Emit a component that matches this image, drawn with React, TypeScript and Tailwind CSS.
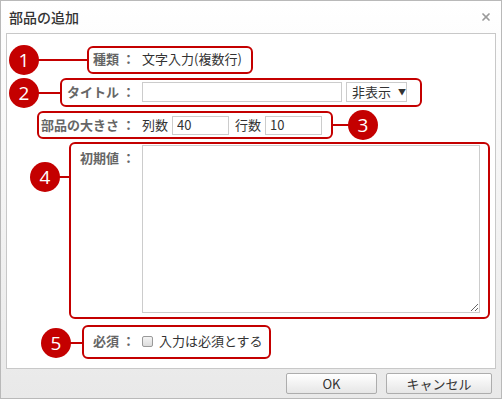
import { X } from 'lucide-react';

const font = { fontFamily: '"Noto Sans CJK JP", "Noto Sans", sans-serif' };

function Marker({ n, className }: { n: number; className: string }) {
  return (
    <div
      className={`absolute flex h-[30px] w-[30px] items-center justify-center rounded-full bg-[#c40000] text-[19px] leading-none text-white ${className}`}
      style={{ fontFamily: '"Open Sans", sans-serif' }}
    >
      {n}
    </div>
  );
}

function Label({ text, className = '' }: { text: string; className?: string }) {
  return (
    <span className={`whitespace-nowrap text-right font-bold text-[#666] ${className}`}>
      {text}
      <span className="ml-[3px]">：</span>
    </span>
  );
}

export default function App() {
  return (
    <div className="relative h-[399px] w-[502px] bg-white text-[13px] text-[#333]" style={font}>
      <div className="flex h-full flex-col border border-[#b9b9b9] bg-gradient-to-b from-white to-[#e9e9e9]">
        {/* title bar */}
        <div className="flex h-[32px] items-center justify-between pl-[8px] pr-[9px]">
          <span className="text-[14px] font-medium text-[#333]">部品の追加</span>
          <X className="h-[12px] w-[12px] text-[#9a9a9a]" strokeWidth={3.5} />
        </div>

        {/* content */}
        <div className="mx-[5px] flex h-[336px] flex-col border border-[#c8c8c8] bg-white">
          <div className="mt-[13px] grid h-[24px] grid-cols-[128px_1fr] items-center gap-x-[7px]">
            <Label text="種類" />
            <span>文字入力(複数行)</span>
          </div>

          <div className="mt-[11px] grid h-[20px] grid-cols-[128px_1fr] items-center gap-x-[7px]">
            <Label text="タイトル" />
            <div className="flex items-center gap-[4px]">
              <input className="h-[20px] w-[200px] border border-[#ccc] outline-none" />
              <div className="flex h-[20px] w-[61px] items-center gap-[7px] whitespace-nowrap border border-[#ccc] pl-[5px]">
                <span>非表示</span>
                <span className="text-[8px]">▼</span>
              </div>
            </div>
          </div>

          <div className="mt-[13px] grid h-[20px] grid-cols-[128px_1fr] items-center gap-x-[7px]">
            <Label text="部品の大きさ" />
            <div className="flex items-center">
              <span className="mr-[4px]">列数</span>
              <input className="h-[19px] w-[57px] border border-[#ccc] px-[4px] outline-none" defaultValue="40" />
              <span className="ml-[6px] mr-[4px]">行数</span>
              <input className="h-[19px] w-[57px] border border-[#ccc] px-[4px] outline-none" defaultValue="10" />
            </div>
          </div>

          <div className="mt-[10px] grid h-[168px] grid-cols-[128px_1fr] gap-x-[7px]">
            <Label text="初期値" className="pt-[3px]" />
            <textarea className="h-[168px] w-[338px] border border-[#ccc] outline-none" />
          </div>

          <div className="mt-[18px] grid h-[20px] grid-cols-[128px_1fr] items-center gap-x-[7px]">
            <Label text="必須" />
            <label className="flex items-center gap-[6px]">
              <span className="h-[11px] w-[11px] rounded-[2px] border border-[#999] bg-gradient-to-b from-[#f4f4f4] to-[#dcdcdc]" />
              <span>入力は必須とする</span>
            </label>
          </div>
        </div>

        {/* footer */}
        <div className="flex flex-1 items-center justify-end gap-[9px] pr-[9px]">
          <button className="h-[21px] w-[91px] rounded-[2px] border border-[#adadad] bg-gradient-to-b from-white to-[#e6e6e6] text-[13px] text-[#333]">
            OK
          </button>
          <button className="h-[21px] w-[106px] rounded-[2px] border border-[#adadad] bg-gradient-to-b from-white to-[#e6e6e6] text-[13px] text-[#333]">
            キャンセル
          </button>
        </div>
      </div>

      {/* annotations */}
      <div className="absolute left-[87px] top-[46px] h-[28px] w-[166px] rounded-[6px] border-2 border-[#c40000]" />
      <div className="absolute left-[38px] top-[59px] h-[2px] w-[49px] bg-[#c40000]" />
      <Marker n={1} className="left-[9px] top-[45px]" />

      <div className="absolute left-[60px] top-[78px] h-[29px] w-[362px] rounded-[6px] border-2 border-[#c40000]" />
      <div className="absolute left-[38px] top-[92px] h-[2px] w-[22px] bg-[#c40000]" />
      <Marker n={2} className="left-[9px] top-[78px]" />

      <div className="absolute left-[37px] top-[111px] h-[28px] w-[296px] rounded-[6px] border-2 border-[#c40000]" />
      <div className="absolute left-[332px] top-[124px] h-[2px] w-[20px] bg-[#c40000]" />
      <Marker n={3} className="left-[348px] top-[110px]" />

      <div className="absolute left-[69px] top-[142px] h-[177px] w-[421px] rounded-[6px] border-2 border-[#c40000]" />
      <div className="absolute left-[58px] top-[176px] h-[2px] w-[12px] bg-[#c40000]" />
      <Marker n={4} className="left-[30px] top-[162px]" />

      <div className="absolute left-[82px] top-[325px] h-[34px] w-[189px] rounded-[6px] border-2 border-[#c40000]" />
      <div className="absolute left-[70px] top-[342px] h-[2px] w-[12px] bg-[#c40000]" />
      <Marker n={5} className="left-[41px] top-[328px]" />
    </div>
  );
}
